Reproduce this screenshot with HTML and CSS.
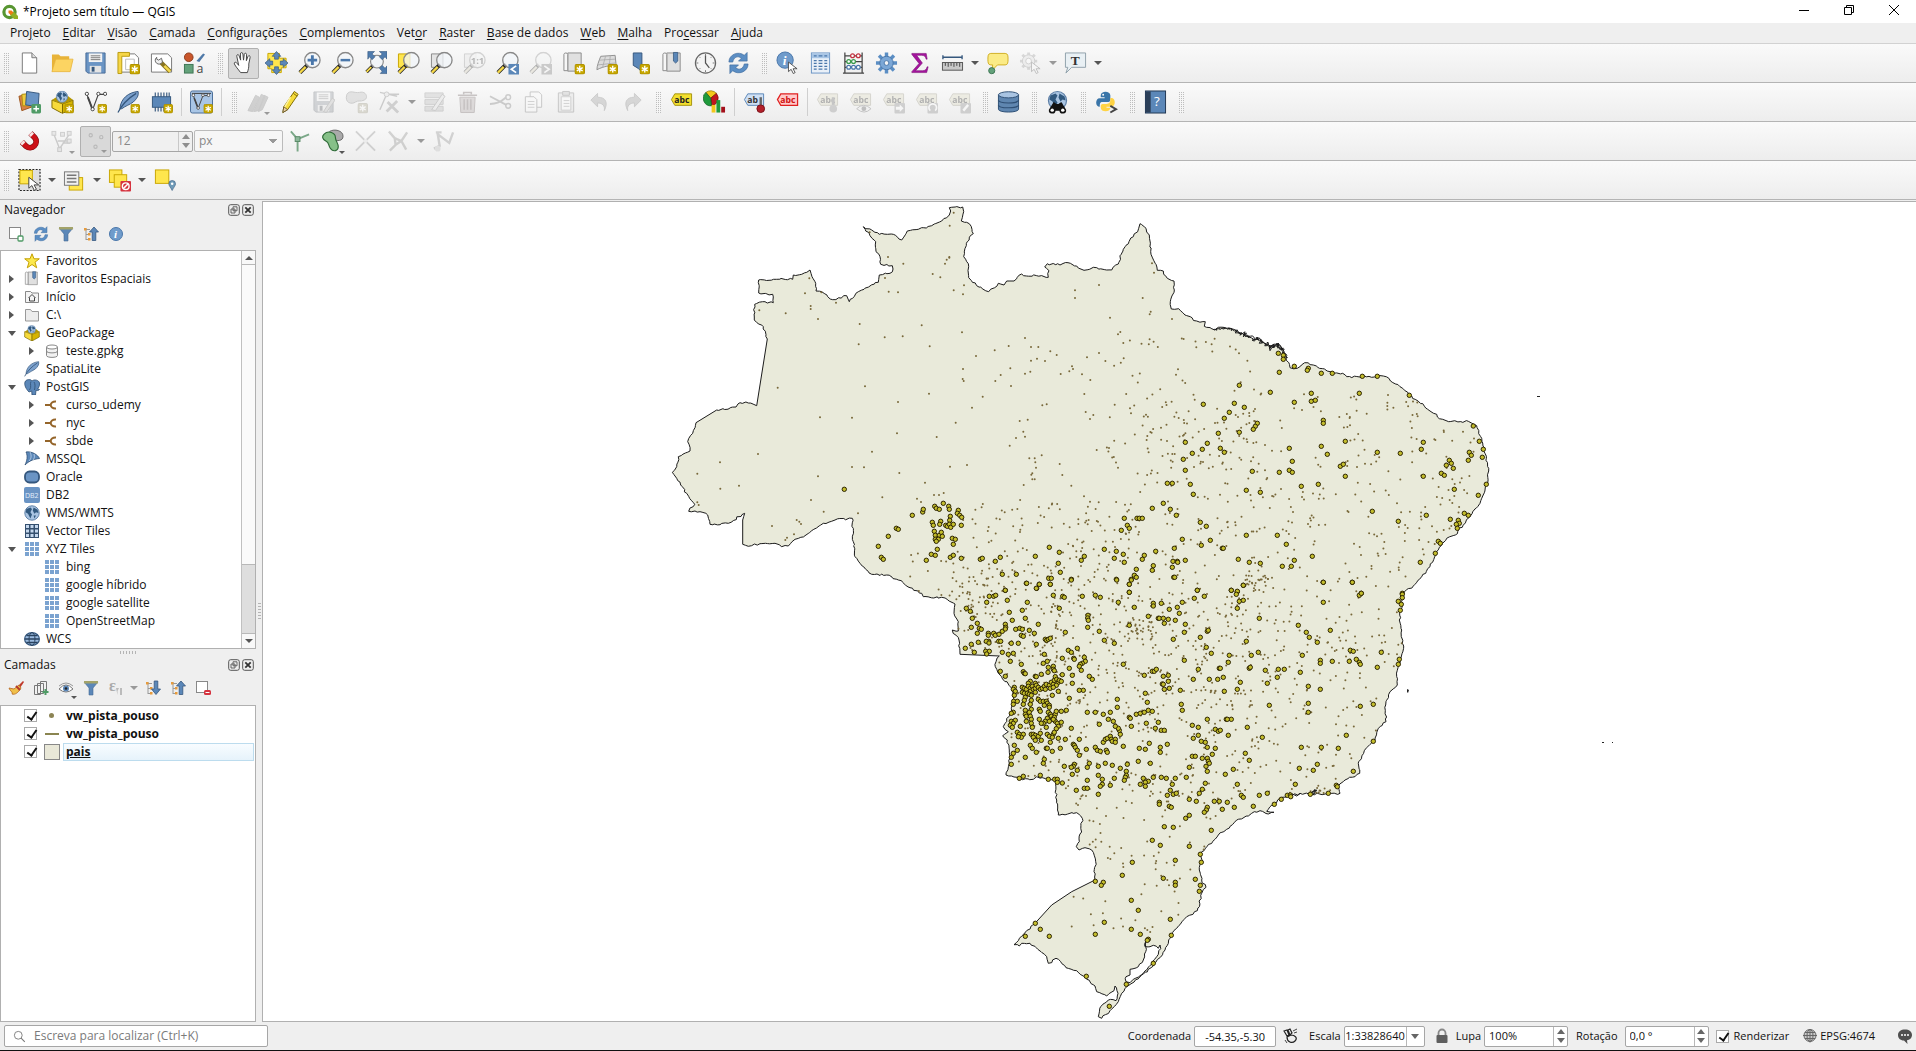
FILE: index.html
```html
<!DOCTYPE html>
<html lang="pt-BR">
<head>
<meta charset="utf-8">
<title>*Projeto sem título — QGIS</title>
<link rel="stylesheet" href="styles.css">
</head>
<body>
<svg class="defs" aria-hidden="true">
  <defs>
    <symbol id="b-new" viewBox="0 0 10 10"><rect x=".5" y=".5" width="9" height="9" rx="1.5" fill="#c8a800" stroke="#b09200"/><path d="M5 1.8v6.4M2.2 3.4l5.6 3.2M7.8 3.4L2.2 6.6" stroke="#fff" stroke-width="1.3"/></symbol>
    <symbol id="b-lens" viewBox="0 0 24 24"><path d="M10.5 13.5L2 22" stroke="#222" stroke-width="4.2"/><path d="M8 16l-6 6" stroke="#f5d848" stroke-width="2.4"/><circle cx="15" cy="9" r="8" fill="#f2f6fa" fill-opacity=".75" stroke="#888" stroke-width="1.4"/></symbol>
    <symbol id="b-cursor" viewBox="0 0 12 14"><path d="M1 1v10l2.8-2.4L6 13l2-1-2.2-4H10z" fill="#fff" stroke="#444" stroke-width=".9"/></symbol>
    <symbol id="b-globe" viewBox="0 0 20 20"><circle cx="10" cy="10" r="9" fill="#a9c4e2" stroke="#5d7fa6" stroke-width="1.2"/><path d="M3 5l5-2 2 2-2 4 2 3-2 5-3-6-3-2zM12 3l5 3 1 4-3-1-2 2-2-4zM12 13l3 0-2 4z" fill="#31597f"/></symbol>

    <symbol id="i-new" viewBox="0 0 24 24"><path d="M4.500 1.500h10l5 5v16h-15z" fill="#fff" stroke="#777"/><path d="M14.500 1.500v5h5" fill="#ddd" stroke="#777"/></symbol>
    <symbol id="i-open" viewBox="0 0 24 24"><path d="M1 3h7l2 2h9v4H5L1 22z" fill="#e8b339"/><path d="M5 8h18l-3 13H1z" fill="#fcd462" stroke="#e8b339" stroke-width=".8"/></symbol>
    <symbol id="i-save" viewBox="0 0 24 24"><path d="M2 1.500h20v21H4l-2-2z" fill="#6a94c4" stroke="#476b96"/><path d="M5 2h14v9H5z" fill="#f3f3f3"/><path d="M7 4.500h10M7 6.500h10M7 8.500h10" stroke="#777"/><path d="M6 15h12v7H6z" fill="#e4e4e4"/><path d="M8 16h3v5H8z" fill="#35577d"/></symbol>
    <symbol id="i-layout" viewBox="0 0 24 24"><path d="M2.500 2.500h16l4 4v15h-20z" fill="#fff" stroke="#777"/><path d="M1 1h12v4H5v18H1z" fill="#f6d648" stroke="#b89a10"/><path d="M9 8h9v11H9z" fill="#fff" stroke="#bbb"/><use href="#b-new" x="13" y="13" width="11" height="11"/></symbol>
    <symbol id="i-layoutmgr" viewBox="0 0 24 24"><path d="M1.500 2.500h17l4 4v15h-21z" fill="#fff" stroke="#777"/><path d="M11 11l10 10" stroke="#8a7520" stroke-width="4.500"/><path d="M15 15l6 6" stroke="#f4d94e" stroke-width="2.600"/><path d="M7 6a4 4 0 1 0 6 5l-1-4-3 2-2-1z" fill="#eee" stroke="#666"/></symbol>
    <symbol id="i-style" viewBox="0 0 24 24"><circle cx="6" cy="6" r="4.500" fill="#c9562b" stroke="#8d3a1a"/><path d="M14 10l7-8 2 1-6 8z" fill="#4f79a8"/><rect x="1.500" y="13.500" width="9" height="9" fill="#63a17a" stroke="#3d7553"/><text x="14" y="22.500" font-size="13" class="glyph" fill="#444">a</text></symbol>
    <symbol id="i-hand" viewBox="0 0 24 24"><path d="M9 22c-3-4-5-6-6.500-9-.6-2 1.500-2.400 2.700-.8L7 14.500 5 5c-.4-2 1.900-2.400 2.400-.6L9 9 8.800 2.600c0-2 2.400-2 2.600 0L12 9l.8-6c.3-1.800 2.500-1.500 2.400.3L15 9.600l1.600-4.300c.7-1.700 2.700-.9 2.300.8L17.500 13c.3 3-.5 6-1.500 9z" fill="#fff" stroke="#444"/></symbol>
    <symbol id="i-pansel" viewBox="0 0 24 24"><path d="M3 2h12v5h7v10h-5v5H7v-4H3z" fill="#ffe64d" stroke="#c9a600"/><path d="M12 0l4.500 5H14v3h-4V5H7.500zM12 24l4.500-5H14v-3h-4v3H7.500zM0 12l5-4.500V10h3v4H5v2.500zM24 12l-5-4.500V10h-3v4h3v2.500z" fill="#5b87b8" stroke="#35577d" stroke-width=".7"/></symbol>
    <symbol id="i-zin" viewBox="0 0 24 24"><use href="#b-lens"/><path d="M15 4v10M10 9h10" stroke="#4a77aa" stroke-width="3"/></symbol>
    <symbol id="i-zout" viewBox="0 0 24 24"><use href="#b-lens"/><path d="M10 9h10" stroke="#4a77aa" stroke-width="2.600"/></symbol>
    <symbol id="i-zfull" viewBox="0 0 24 24"><use href="#b-lens" x="1" y="3" width="20" height="20"/><path d="M4 0h7L8.500 2.500l3 3-3 3-3-3L4 8zM24 0v8l-2-2.500-3 3-3-3 3-3L16 0zM24 23h-7l2-2.500-3-3 3-3 3 3 2-2.500z" fill="#4f7cae" stroke="#35577d" stroke-width=".6"/></symbol>
    <symbol id="i-zsel" viewBox="0 0 24 24"><path d="M1.500 2.500h12v14h-12z" fill="#ffe64d" stroke="#c9a600"/><use href="#b-lens"/></symbol>
    <symbol id="i-zlayer" viewBox="0 0 24 24"><path d="M1.500 2.500h12v14h-12z" fill="#e4e4e4" stroke="#888"/><use href="#b-lens"/></symbol>
    <symbol id="i-znat" viewBox="0 0 24 24"><use href="#i-zlayer"/><text x="8" y="13" font-size="10" font-weight="700" class="glyph" fill="#333">1:1</text></symbol>
    <symbol id="i-zlast" viewBox="0 0 24 24"><use href="#b-lens"/><rect x="13" y="13" width="11" height="11" fill="#5b87b8"/><path d="M21 15l-5 3.500 5 3.500" fill="none" stroke="#fff" stroke-width="1.800"/></symbol>
    <symbol id="i-znext" viewBox="0 0 24 24"><use href="#b-lens"/><rect x="13" y="13" width="11" height="11" fill="#777"/><path d="M16 15l5 3.500-5 3.500" fill="none" stroke="#fff" stroke-width="1.800"/></symbol>
    <symbol id="i-map" viewBox="0 0 24 24"><path d="M6 1.500h14v19H6z" fill="#e0e0e0" stroke="#8a8a8a"/><path d="M2 3c0-2 4-2 4 0v17H2z" fill="#f6f6f6" stroke="#8a8a8a"/></symbol>
    <symbol id="i-newmap" viewBox="0 0 24 24"><use href="#i-map"/><use href="#b-new" x="13" y="13" width="11" height="11"/></symbol>
    <symbol id="i-new3d" viewBox="0 0 24 24"><path d="M6 5l15-1 1 10c-7 1-12 1-20 5 0-4 2-9 4-14z" fill="#dcdcdc" stroke="#8f8f8f"/><path d="M5 9l16-1M3 14l18-2M11 5L8 16M16 4l-1 10" stroke="#a8a8a8" stroke-width=".8"/><use href="#b-new" x="13" y="13" width="11" height="11"/></symbol>
    <symbol id="i-newbm" viewBox="0 0 24 24"><path d="M5.500 1.500h9v20l-4-4-5-3z" fill="#5b87b8" stroke="#35577d"/><use href="#b-new" x="12" y="13" width="11" height="11"/></symbol>
    <symbol id="i-bm" viewBox="0 0 24 24"><use href="#i-map"/><path d="M13 1h4.500v9l-2.250 2L13 10z" fill="#5b87b8" stroke="#35577d" stroke-width=".8"/></symbol>
    <symbol id="i-clock" viewBox="0 0 24 24"><circle cx="12" cy="12" r="10.500" fill="#f4f4f4" stroke="#666" stroke-width="1.300"/><path d="M12 4v8l4 5" fill="none" stroke="#555" stroke-width="1.300"/><path d="M12 2.500v2M12 19.500v2M2.500 12h2M19.500 12h2M5.500 5.500l1 1M18.500 5.500l-1 1M5.500 18.500l1-1M18.500 18.500l-1-1" stroke="#777"/></symbol>
    <symbol id="i-refresh" viewBox="0 0 24 24"><path d="M2 11C2 3 12-1 18 4l3-3v9h-9l3-3c-4-3-8-1-9 4z" fill="#5b8ec4" stroke="#3f6c9f" stroke-width=".7"/><path d="M22 13c0 8-10 12-16 7l-3 3v-9h9l-3 3c4 3 8 1 9-4z" fill="#5b8ec4" stroke="#3f6c9f" stroke-width=".7"/></symbol>
    <symbol id="i-info" viewBox="0 0 24 24"><circle cx="9.500" cy="9" r="8.500" fill="#6f9bcb" stroke="#4a77aa"/><text x="7" y="14" font-size="14" class="serif" fill="#fff">i</text><use href="#b-cursor" x="12" y="10" width="12" height="14"/></symbol>
    <symbol id="i-table" viewBox="0 0 24 24"><rect x="2.500" y="1.500" width="19" height="21" fill="#e9f0f8" stroke="#6a94c4"/><path d="M3 2h18v5H3z" fill="#a9c6e6"/><path d="M5 4.500h3M10 4.500h4M16 4.500h3M5 9.500h3M10 9.500h4M16 9.500h3M5 12.500h3M10 12.500h4M16 12.500h3M5 15.500h3M10 15.500h4M16 15.500h3M5 18.500h3M10 18.500h4M16 18.500h3" stroke="#4a77aa" stroke-width="1.300"/></symbol>
    <symbol id="i-abacus" viewBox="0 0 24 24"><path d="M3 1v21M21 1v21M1 22.500h22M3 4.500h18M3 10.500h18M3 16.500h18" stroke="#444" stroke-width="1.300"/><g fill="#fff" stroke-width="1.300"><g stroke="#c2333f"><circle cx="11" cy="4.500" r="2"/><circle cx="17" cy="4.500" r="2"/></g><g stroke="#3a9a4c"><circle cx="7" cy="10.500" r="2"/><circle cx="12" cy="10.500" r="2"/></g><g stroke="#4a77aa"><circle cx="7" cy="16.500" r="2"/><circle cx="12" cy="16.500" r="2"/><circle cx="17" cy="16.500" r="2"/></g></g></symbol>
    <symbol id="i-gear" viewBox="0 0 24 24"><path d="M12 1v22M1 12h22M4.200 4.200l15.600 15.600M19.800 4.200L4.200 19.800" stroke="#5b8ec4" stroke-width="3.600"/><circle cx="12" cy="12" r="7" fill="#7ba7d6" stroke="#4a77aa"/><circle cx="12" cy="12" r="2.500" fill="#f5f5f5" stroke="#4a77aa"/></symbol>
    <symbol id="i-sum" viewBox="0 0 24 24"><path d="M4 2h15l1 6h-1c-1-3-2-4-5-4H9l6 8-7 8h7c3 0 4-1 5-4h1l-1.500 6H4v-1l7.500-8.500L4 3z" fill="#a3149c" stroke="#7e0f79" stroke-width=".6"/></symbol>
    <symbol id="i-ruler" viewBox="0 0 24 24"><path d="M2 6h20M2 4v4M22 4v4" stroke="#35577d" stroke-width="1.400"/><rect x="1.500" y="11.500" width="21" height="8" fill="#c9c9c9" stroke="#555"/><path d="M4.500 12v3M7.500 12v4M10.500 12v3M13.500 12v4M16.500 12v3M19.500 12v4" stroke="#444"/></symbol>
    <symbol id="i-tip" viewBox="0 0 24 24"><path d="M5 2h15c3 0 3 3 3 6s0 6-3 6h-8l-6 6 1-6H5c-3 0-3-3-3-6s0-6 3-6z" fill="#fbeb86" stroke="#d0ae20"/><circle cx="6" cy="20" r="3.200" fill="#63a17a" stroke="#3d7553"/></symbol>
    <symbol id="i-action" viewBox="0 0 24 24"><path d="M10 1v18M1 10h18M3.500 3.500l13 13M16.500 3.500l-13 13" stroke="#999" stroke-width="3"/><circle cx="10" cy="10" r="6.500" fill="#ddd" stroke="#888"/><circle cx="10" cy="10" r="3" fill="#fff" stroke="#888"/><use href="#b-cursor" x="12" y="10" width="12" height="14"/></symbol>
    <symbol id="i-text" viewBox="0 0 24 24"><path d="M1.500 1.500h21v15H8l-6 6 2-6H1.500z" fill="#e9f0f4" stroke="#8fa0aa"/><text x="7" y="14" font-size="14" class="serif upright" fill="#333">T</text></symbol>

    <symbol id="i-dsm" viewBox="0 0 24 24"><path d="M1 6l11-3 3 14-11 4z" fill="#d98243" stroke="#9d561f"/><path d="M4 4l10-1v13H5z" fill="#f0cc3d" stroke="#b08f10"/><path d="M9 1l13 2-1 14-13-2z" fill="#6a94c4" stroke="#35577d"/><rect x="14" y="14" width="10" height="10" rx="1.500" fill="#4f9b66"/><path d="M19 16v6M16 19h6" stroke="#fff" stroke-width="1.500"/></symbol>
    <symbol id="i-gpkg" viewBox="0 0 24 24"><path d="M1 10l11 4v10L1 18z" fill="#f7da3a" stroke="#7d6a00"/><path d="M12 14l11-4v8l-11 6z" fill="#d6b400" stroke="#7d6a00"/><path d="M1 10l6-4h11l5 4-11 4z" fill="#b39600"/><use href="#b-globe" x="4" y="0" width="15" height="13"/></symbol>
    <symbol id="i-newgpkg" viewBox="0 0 24 24"><use href="#i-gpkg"/><use href="#b-new" x="14" y="14" width="10" height="10"/></symbol>
    <symbol id="i-shape" viewBox="0 0 24 24"><path d="M3 4l6 16L15 4h7" fill="none" stroke="#444" stroke-width="1.200"/><path d="M4 7l5 13" stroke="#444" stroke-width="2"/><g fill="#fff" stroke="#444"><circle cx="3" cy="3.500" r="1.700"/><circle cx="9" cy="19.500" r="1.700"/><circle cx="15" cy="3.500" r="1.700"/><circle cx="22" cy="3.500" r="1.700"/></g></symbol>
    <symbol id="i-newshape" viewBox="0 0 24 24"><use href="#i-shape"/><use href="#b-new" x="14" y="14" width="10" height="10"/></symbol>
    <symbol id="i-feather" viewBox="0 0 24 24"><path d="M3 19C4 8 12 2 22 1c1 5-2 8-5 11-4 3-8 4-12 7z" fill="#7ba0cc" stroke="#35577d"/><path d="M1 23C5 15 12 8 20 3" fill="none" stroke="#35577d" stroke-width="1.300"/></symbol>
    <symbol id="i-newfeather" viewBox="0 0 24 24"><use href="#i-feather"/><use href="#b-new" x="14" y="14" width="10" height="10"/></symbol>
    <symbol id="i-mem" viewBox="0 0 24 24"><path d="M5.500 2v20M8.500 2v20M11.500 2v20M14.500 2v20M17.500 2v20M20 2v15" stroke="#35577d" stroke-width="1.200"/><rect x="2.500" y="6.500" width="19" height="11" fill="#5b87b8" stroke="#35577d"/><use href="#b-new" x="14" y="14" width="10" height="10"/></symbol>
    <symbol id="i-virtual" viewBox="0 0 24 24"><rect x=".5" y=".5" width="23" height="23" rx="2" fill="#a9c6e6" stroke="#476b96"/><path d="M2 3h20" stroke="#333"/><use href="#i-shape" x="1" y="2" width="20" height="20"/><use href="#b-new" x="14" y="14" width="10" height="10"/></symbol>

    <symbol id="i-edits" viewBox="0 0 24 24"><path d="M2 21l8-16 4 2-7 15zM8 22l8-18 4 2-7 15zM13 22l6-17 4 2-6 13z" fill="#888" stroke="#777"/></symbol>
    <symbol id="i-pencil" viewBox="0 0 24 24"><path d="M4 23l1-6L16 1l4 3L9 20z" fill="#f6dc3c" stroke="#7d6a00"/><path d="M15 3l4 3" stroke="#7d6a00"/><path d="M4 23l1-6 4 3z" fill="#e9cfa4" stroke="#5b4b20" stroke-width=".8"/><path d="M12 7L6 17" stroke="#fff4a0" stroke-width="1.500"/></symbol>
    <symbol id="i-saveedit" viewBox="0 0 24 24"><use href="#i-save"/><path d="M12 22l9-14 3 2-9 13z" fill="#bbb" stroke="#777"/></symbol>
    <symbol id="i-addpoly" viewBox="0 0 24 24"><path d="M2 4c3-5 8-1 13-2 7-2 10 6 5 8-4 2-6 0-9 2-4 3-12 1-9-8z" fill="#bbb" stroke="#777"/><use href="#b-new" x="13" y="13" width="11" height="11"/></symbol>
    <symbol id="i-vertex" viewBox="0 0 24 24"><path d="M2 20L9 4M2 2l18 4M9 4l13 0" stroke="#777" stroke-width="1.500"/><circle cx="9" cy="4" r="2.500" fill="#ddd" stroke="#777"/><path d="M10 12l11 11M20 11L9 22" stroke="#888" stroke-width="3"/></symbol>
    <symbol id="i-modattr" viewBox="0 0 24 24"><path d="M2 2.500h19v5H2zM2 9.500h19v5H2zM2 16.500h19v5H2z" fill="#b9b9b9" stroke="#888"/><path d="M9 20L20 4l3 2-10 15z" fill="#ddd" stroke="#777"/></symbol>
    <symbol id="i-trash" viewBox="0 0 24 24"><path d="M4 7h16l-1 16H5z" fill="#d99a9a" stroke="#a05050"/><path d="M2 5h20M8 4V2h8v2M8.500 9v11M12 9v11M15.500 9v11" fill="none" stroke="#a05050" stroke-width="1.600"/></symbol>
    <symbol id="i-cut" viewBox="0 0 24 24"><path d="M1 6l17 9M1 14c6 0 10-1 17-7" fill="none" stroke="#777" stroke-width="2"/><circle cx="20" cy="7" r="2.500" fill="none" stroke="#777" stroke-width="1.500"/><circle cx="20" cy="16" r="2.500" fill="none" stroke="#777" stroke-width="1.500"/></symbol>
    <symbol id="i-copy" viewBox="0 0 24 24"><path d="M8.500 1.500h9l3 3v13h-12z" fill="#fff" stroke="#666"/><path d="M3.500 6.500h9l3 3v13h-12z" fill="#fff" stroke="#666"/><path d="M6 11.500h7M6 14.500h7M6 17.500h7" stroke="#888"/></symbol>
    <symbol id="i-paste" viewBox="0 0 24 24"><path d="M3.500 2.500h16v20h-16z" fill="#ddd" stroke="#666"/><path d="M8 1h7v4H8z" fill="#bbb" stroke="#666"/><path d="M6.500 6.500h10v14h-10z" fill="#fff" stroke="#888"/><path d="M9 10.500h6M9 13.500h6M9 16.500h6" stroke="#888"/></symbol>
    <symbol id="i-undo" viewBox="0 0 24 24"><path d="M3 10l7-7v4c9 0 11 6 7 14 1-5-2-8-7-8v4z" fill="#999" stroke="#777"/></symbol>
    <symbol id="i-redo" viewBox="0 0 24 24"><path d="M21 10l-7-7v4c-9 0-11 6-7 14-1-5 2-8 7-8v4z" fill="#999" stroke="#777"/></symbol>
    <symbol id="i-label" viewBox="0 0 24 24"><path d="M5 3.500h17.500v12H5L1.500 9.500z" fill="#f3df2e" stroke="#a59310"/><text x="4.500" y="13" font-size="9" font-weight="700" class="glyph" fill="#222">abc</text></symbol>
    <symbol id="i-diagram" viewBox="0 0 24 24"><path d="M8 8L3 2a8 8 0 0 1 11 1z" fill="#f3c71b" stroke="#8a6d00" stroke-width=".7"/><path d="M8 8l6-5a8 8 0 0 1-5 13z" fill="#c2161f" stroke="#700" stroke-width=".7"/><path d="M8 8L3 2a8 8 0 0 0 6 14z" fill="#1f9a3c" stroke="#0c5a20" stroke-width=".7"/><path d="M9 15h4v8H9z" fill="#f3c71b"/><path d="M14 10h4v13h-4z" fill="#1f9a3c"/><path d="M19 17h4v6h-4z" fill="#a3101a"/></symbol>
    <symbol id="i-pin" viewBox="0 0 24 24"><path d="M5 3.500h16.500v12H5L1.500 9.500z" fill="#cfe0f4" stroke="#5b87b8"/><text x="4.500" y="13" font-size="9" font-weight="700" class="glyph" fill="#333">ab</text><path d="M18.500 7v8" stroke="#666" stroke-width="2.500"/><circle cx="18.500" cy="19" r="4" fill="#b3202a" stroke="#7a1018"/></symbol>
    <symbol id="i-labelred" viewBox="0 0 24 24"><path d="M5 3.500h17.500v12H5L1.500 9.500z" fill="#ffc9c9" stroke="#e02020" stroke-width="1.300"/><text x="4.500" y="13" font-size="9" font-weight="700" class="glyph" fill="#d01010">abc</text></symbol>
    <symbol id="i-lpin" viewBox="0 0 24 24"><use href="#i-label"/><path d="M18 7v8" stroke="#666" stroke-width="3"/><circle cx="18" cy="19" r="4" fill="#888"/></symbol>
    <symbol id="i-leye" viewBox="0 0 24 24"><use href="#i-label"/><path d="M8 19q7-7 15 0-7 7-15 0z" fill="#eee" stroke="#666"/><circle cx="15.500" cy="19" r="2.500" fill="#555"/></symbol>
    <symbol id="i-lmove" viewBox="0 0 24 24"><use href="#i-label"/><rect x="13" y="13" width="11" height="11" rx="1" fill="#888"/><path d="M14.500 17h4v-2.500l4 4-4 4V20h-4z" fill="#fff"/></symbol>
    <symbol id="i-lrot" viewBox="0 0 24 24"><use href="#i-label"/><rect x="13" y="13" width="11" height="11" rx="1" fill="#888"/><path d="M16 21a4 4 0 1 1 5 0" fill="none" stroke="#fff" stroke-width="1.800"/></symbol>
    <symbol id="i-lchg" viewBox="0 0 24 24"><use href="#i-label"/><rect x="13" y="13" width="11" height="11" rx="1" fill="#888"/><path d="M16 21l5-6" stroke="#fff" stroke-width="2.500"/></symbol>
    <symbol id="i-db" viewBox="0 0 24 24"><path d="M1.500 4.500v15c0 4 21 4 21 0v-15" fill="#5f86b0" stroke="#2f4f74"/><ellipse cx="12" cy="4.500" rx="10.500" ry="3.200" fill="#a9c4e2" stroke="#2f4f74"/><path d="M1.500 10c0 4 21 4 21 0M1.500 15c0 4 21 4 21 0" fill="none" stroke="#2f4f74" stroke-width="1.200"/></symbol>
    <symbol id="i-metasearch" viewBox="0 0 24 24"><use href="#b-globe" x="0" y="0" width="24" height="21"/><path d="M8 12l3 2h2l3-2 5 8a3.500 3.500 0 1 1-7 1h-4a3.500 3.500 0 1 1-7-1z" fill="#111"/><circle cx="6.500" cy="20.500" r="1.800" fill="#fff"/><circle cx="17.500" cy="20.500" r="1.800" fill="#fff"/></symbol>
    <symbol id="i-python" viewBox="0 0 24 24"><path d="M6 10V5c0-5 10-5 10 0v4c0 3-2 3-4 3H8c-3 0-3 2-3 5-5 0-5-9 0-9h5V7H6z" fill="#3a75a8"/><path d="M16 8c6-1 6 9 1 9h-5v1h4c0 5-10 5-10 0 0-3 0-4 3-4h3c3 0 4-2 4-4z" fill="#ffd343"/><circle cx="8.500" cy="4.500" r="1" fill="#fff"/><path d="M16 16l6 3.500-6 3.500" fill="none" stroke="#444" stroke-width="2"/></symbol>
    <symbol id="i-help" viewBox="0 0 24 24"><rect x="1.500" y=".5" width="21" height="23" fill="#5b87b8" stroke="#1f3550"/><path d="M2 1h5v22H2z" fill="#2b3f58"/><text x="10.500" y="16" font-size="14" class="glyph" fill="#fff">?</text></symbol>

    <symbol id="i-magnet" viewBox="0 0 24 24"><path d="M13 4l4.500 4.500a6.400 6.400 0 0 1-9 9L4 13" fill="none" stroke="#7d0a0e" stroke-width="6"/><path d="M13 4l4.500 4.500a6.400 6.400 0 0 1-9 9L4 13" fill="none" stroke="#cc1017" stroke-width="4.800"/><path d="M13 4l2 2M4 13l2 2" stroke="#f6e4e4" stroke-width="4.800"/></symbol>
    <symbol id="i-snapv" viewBox="0 0 24 24"><path d="M3 5l6 15L19 5M7 12h12M12 14h8" fill="none" stroke="#777" stroke-width="1.500"/><g fill="#ccc" stroke="#777"><rect x="1" y="2" width="4" height="4"/><rect x="7" y="19" width="4" height="4"/><rect x="17" y="2" width="4" height="4"/><rect x="17" y="10" width="4" height="4"/><rect x="10" y="3" width="4" height="4"/></g></symbol>
    <symbol id="i-snapdots" viewBox="0 0 24 24"><g fill="#ddd" stroke="#777" stroke-width="1.200"><circle cx="7" cy="6" r="1.700"/><circle cx="18" cy="8" r="1.700"/><circle cx="12" cy="18" r="1.700"/></g></symbol>
    <symbol id="i-topo" viewBox="0 0 24 24"><path d="M10 10L3 2M10 10l12-5M10 10v13" stroke="#7ba888" stroke-width="2"/><rect x="7.500" y="7.500" width="5" height="5" fill="#8cb89a" stroke="#5a8a68"/></symbol>
    <symbol id="i-overlap" viewBox="0 0 24 24"><path d="M9 2c5-3 14-1 14 5s-7 4-9 5z" fill="#aaa" stroke="#666"/><path d="M3 5c5-5 12-1 12 3s3 6 3 10-5 6-8 2-1-6-5-8-4-5-2-7z" fill="#86c088" stroke="#2f6b38" stroke-width="1.200"/></symbol>
    <symbol id="i-cross" viewBox="0 0 24 24"><path d="M2 2l20 20M22 2L2 22" stroke="#888" stroke-width="2"/><circle cx="12" cy="12" r="2" fill="#ddd"/></symbol>
    <symbol id="i-trace" viewBox="0 0 24 24"><path d="M2 2l6 7 1 7-6 6M8 9l7 3 6-9M9 16l6-4 5 9" fill="none" stroke="#887" stroke-width="2.500"/></symbol>
    <symbol id="i-self" viewBox="0 0 24 24"><path d="M2 20l6-3L6 5l12 9 4-11M4 3h6" fill="none" stroke="#888" stroke-width="2.500"/><circle cx="6" cy="20" r="3" fill="#bbb"/></symbol>
    <symbol id="i-select" viewBox="0 0 24 24"><rect x="1" y="1" width="22" height="22" fill="#dedede" stroke="#222" stroke-dasharray="2 1.500" stroke-width="1.200"/><rect x="2" y="2" width="13" height="14" fill="#ffe64d" stroke="#c9a600"/><use href="#b-cursor" x="10" y="8" width="14" height="16"/></symbol>
    <symbol id="i-selval" viewBox="0 0 24 24"><rect x="6.500" y="9.500" width="14" height="13" fill="#ffe64d" stroke="#c9a600"/><rect x="1.500" y="3.500" width="15" height="14" fill="#f1f1f1" stroke="#777"/><path d="M4 7h10M4 10.500h10M4 14h10" stroke="#777" stroke-width="1.500"/></symbol>
    <symbol id="i-desel" viewBox="0 0 24 24"><rect x="1.500" y="1.500" width="13" height="13" fill="#ffe64d" stroke="#c9a600"/><rect x="6.500" y="6.500" width="13" height="13" fill="#ffe64d" stroke="#c9a600"/><rect x="13" y="13" width="11" height="11" rx="1" fill="#d5333f"/><circle cx="18.500" cy="18.500" r="3.500" fill="none" stroke="#fff" stroke-width="1.500"/><path d="M16 21l5-5" stroke="#fff" stroke-width="1.500"/></symbol>
    <symbol id="i-selloc" viewBox="0 0 24 24"><rect x="2.500" y="1.500" width="14" height="14" fill="#ffe64d" stroke="#c9a600"/><path d="M20 23c-2-4-3.500-5-3.500-7a3.500 3.500 0 0 1 7 0c0 2-1.500 3-3.500 7z" fill="#6f9bb8" stroke="#35577d" stroke-width=".6"/><circle cx="20" cy="16" r="1.300" fill="#fff"/></symbol>

    <symbol id="t-star" viewBox="0 0 16 16"><path d="M8 .8l2 5h5.300L11 9.200l1.700 5.600L8 11.500l-4.700 3.300L5 9.200.7 5.800H6z" fill="#fce94f" stroke="#c4a000"/></symbol>
    <symbol id="t-home" viewBox="0 0 16 16"><path d="M1.500 2.500h5l1.500 1.500h6.500v9.500h-13z" fill="#f4f4f4" stroke="#888"/><path d="M4.500 9L8 5.500 11.500 9M5.500 8.500v3.500h5V8.500" fill="none" stroke="#444"/></symbol>
    <symbol id="t-folder" viewBox="0 0 16 16"><path d="M1.500 2.500h5l1.500 2h6.500v9.500h-13z" fill="#ececec" stroke="#999"/></symbol>
    <symbol id="t-dbs" viewBox="0 0 16 16"><path d="M2.500 4v8.500c0 2.500 11 2.500 11 0V4" fill="#f1f1f1" stroke="#888"/><ellipse cx="8" cy="4" rx="5.500" ry="2" fill="#fff" stroke="#888"/><path d="M2.500 8c0 2.500 11 2.500 11 0" fill="none" stroke="#888"/></symbol>
    <symbol id="t-pg" viewBox="0 0 16 16"><path d="M1 3c1-3 6-3 7-1 2-2 7-1 7.500 2 .3 3-1 5-2 6l2 .5c-1 1.500-3 1-3.500.8L11.500 16H8l-.3-4L5 13C2 10 0 6 1 3z" fill="#5b87b8" stroke="#2f4f74" stroke-width=".8"/><path d="M7 2.500C5.500 5 8 8 5.500 11M10 3c1.500 2 1 5 .5 8" fill="none" stroke="#2f4f74" stroke-width=".8"/></symbol>
    <symbol id="t-conn" viewBox="0 0 16 16"><path d="M1 8h6M12 4.500C5 4 5 12 12 11.500" fill="none" stroke="#95652a" stroke-width="2"/></symbol>
    <symbol id="t-mssql" viewBox="0 0 16 16"><path d="M2 1c6-1 12 3 13.500 6.500C11 8 6 9 1 14c2-4 3-9 1-13z" fill="#5b87b8" stroke="#2f4f74" stroke-width=".8"/><path d="M6 1c2 4 1 7-1 9M10 3c1 3 0 5-1 6" fill="none" stroke="#cfe0f4" stroke-width=".7"/></symbol>
    <symbol id="t-oracle" viewBox="0 0 16 16"><rect x="1" y="2.500" width="14" height="11" rx="4.500" fill="#6a94c4" stroke="#35577d" stroke-width="1.800"/></symbol>
    <symbol id="t-db2" viewBox="0 0 16 16"><rect width="16" height="16" rx="2" fill="#6a94c4"/><text x="1" y="10.500" font-size="7" class="glyph" fill="#e4eefa">DB2</text></symbol>
    <symbol id="t-wcs" viewBox="0 0 16 16"><ellipse cx="8" cy="8" rx="7.400" ry="6.400" fill="#9bbbe0" stroke="#35577d" stroke-width="1.200"/><path d="M1 8h14M2.500 4.500h11M2.500 11.500h11" stroke="#2a435f" stroke-width="1.500"/><ellipse cx="8" cy="8" rx="3" ry="6.400" fill="none" stroke="#2a435f"/></symbol>
    <symbol id="t-vt" viewBox="0 0 16 16"><rect x="1" y="1" width="14" height="14" fill="#35506f"/><path d="M2 2h3v3H2zM6.500 2h3v3h-3zM11 2h3v3h-3zM2 6.500h3v3H2zM6.500 6.500h3v3h-3zM11 6.500h3v3h-3zM2 11h3v3H2zM6.500 11h3v3h-3zM11 11h3v3h-3z" fill="#c5d8ee"/></symbol>
    <symbol id="t-xyz" viewBox="0 0 16 16"><path d="M1 1h4v4H1zM6 1h4v4H6zM11 1h4v4h-4zM1 6h4v4H1zM6 6h4v4H6zM11 6h4v4h-4zM1 11h4v4H1zM6 11h4v4H6zM11 11h4v4h-4z" fill="#7ba3d0"/></symbol>

    <symbol id="p-add" viewBox="0 0 16 16"><rect x="1.500" y="1.500" width="11" height="11" fill="#fff" stroke="#888"/><rect x="10" y="10" width="5" height="5" rx="1" fill="#fff" stroke="#4f9b66" stroke-width="1.300"/></symbol>
    <symbol id="p-filter" viewBox="0 0 16 16"><path d="M1 2h14L10 8v7H6V8z" fill="#5b87b8" stroke="#476b96" stroke-width=".6"/><path d="M1 1h14v2.500H1z" fill="#a3a36a"/></symbol>
    <symbol id="p-up" viewBox="0 0 16 16"><path d="M3 2v12M3 3.500h4M3 8.500h4M3 13.500h4" stroke="#999"/><path d="M1 2h2.500v2.500H1zM5 7h2.500v2.500H5zM5 12h2.500v2.500H5z" fill="#e79b3c"/><path d="M11 1l4.500 5h-2.700v8.500H9.200V6H6.500z" fill="#5b87b8" stroke="#35577d" stroke-width=".8"/></symbol>
    <symbol id="p-down" viewBox="0 0 16 16"><path d="M3 2v12M3 3.500h4M3 8.500h4M3 13.500h4" stroke="#999"/><path d="M1 2h2.500v2.500H1zM5 7h2.500v2.500H5zM5 12h2.500v2.500H5z" fill="#e79b3c"/><path d="M11 14.500L15.500 9h-2.700V1H9.200v8H6.500z" fill="#5b87b8" stroke="#35577d" stroke-width=".8"/></symbol>
    <symbol id="p-info" viewBox="0 0 16 16"><circle cx="8" cy="8" r="6.500" fill="#6f9bcb" stroke="#4a77aa"/><text x="6" y="12" font-size="11" class="serif" fill="#fff">i</text></symbol>
    <symbol id="p-style" viewBox="0 0 16 16"><path d="M10 6l5-5 1 1-4 6z" fill="#c0392b"/><path d="M1 8l5 1 5-4 2 3c-3 5-6 7-9 6 1-2-2-3-3-6z" fill="#f0c04a" stroke="#b5651d" stroke-width=".8"/><path d="M8 6l4 4" stroke="#b5392b" stroke-width="2"/></symbol>
    <symbol id="p-group" viewBox="0 0 16 16"><path d="M7.500 1.500h6v10h-6zM4.500 3.500h6v10h-6zM1.500 5.500h6v9h-6z" fill="#f1f1f1" stroke="#777"/><path d="M12.500 9v6M9.500 12h6" stroke="#4f9b66" stroke-width="2"/></symbol>
    <symbol id="p-eye" viewBox="0 0 16 16"><path d="M1 9q7-8 14 0-7 6-14 0z" fill="#fff" stroke="#777"/><circle cx="8" cy="8.500" r="3" fill="#5b87b8"/><circle cx="8" cy="8.500" r="1.300" fill="#222"/><path d="M1 6q7-6 14 0" fill="none" stroke="#999"/></symbol>
    <symbol id="p-eps" viewBox="0 0 16 16"><text x="1" y="11" font-size="16" class="serif upright" fill="#aaa">ε</text><path d="M8 8h3l-1.500 3v4zM12 8h2v7h-2z" fill="#bbb"/></symbol>
    <symbol id="p-remove" viewBox="0 0 16 16"><rect x="1.500" y="1.500" width="11" height="11" fill="#fff" stroke="#888"/><rect x="9" y="10" width="7" height="5" rx="1.500" fill="#d5333f"/><path d="M10.500 12.500h4" stroke="#fff"/></symbol>
    <symbol id="p-float" viewBox="0 0 12 12"><rect x=".7" y=".7" width="10.600" height="10.600" rx="2" fill="none" stroke="#555"/><path d="M5 2.800h4v4H5zM3 5h4v4H3z" fill="#eee" stroke="#555" stroke-width=".9"/></symbol>
    <symbol id="p-close" viewBox="0 0 12 12"><rect x=".7" y=".7" width="10.600" height="10.600" rx="2" fill="none" stroke="#555"/><path d="M3.300 3.300l5.400 5.400M8.700 3.300L3.300 8.700" stroke="#333" stroke-width="1.800"/></symbol>
    <symbol id="s-track" viewBox="0 0 16 16"><path d="M2 3l3 5 2-1-2-5zM6 2l2 5 2-2-2-4zM5 9c0 5 5 7 8 4s0-6-4-6z" fill="#eee" stroke="#222" stroke-width="1.200"/><path d="M11 3l4-2M12 5l3-1M3 12l2 3" stroke="#444"/></symbol>
    <symbol id="s-lock" viewBox="0 0 16 16"><path d="M4.500 8V5a3.500 3.500 0 0 1 7 0v3" fill="none" stroke="#888" stroke-width="1.800"/><rect x="2.500" y="7" width="11" height="8" rx="1" fill="#5e5e5e"/></symbol>
    <symbol id="s-globe" viewBox="0 0 16 16"><circle cx="8" cy="7.500" r="6" fill="#c9c9c9" stroke="#666"/><path d="M2 7.500h12M3 4.500h10M3 10.500h10M8 1.500v13M1 7.500h14" stroke="#666"/><ellipse cx="8" cy="7.500" rx="3" ry="6" fill="none" stroke="#666"/></symbol>
    <symbol id="s-chat" viewBox="0 0 16 16"><path d="M8 1.500c4 0 7 2 7 5.500 0 3-2.500 5-5 5.300L10.500 16 7 12.500C3 12.500 1 10 1 7c0-3.500 3-5.500 7-5.500z" fill="#4f4f4f"/><circle cx="5" cy="7" r="1" fill="#fff"/><circle cx="8" cy="7" r="1" fill="#fff"/><circle cx="11" cy="7" r="1" fill="#fff"/></symbol>
    <symbol id="s-search" viewBox="0 0 16 16"><circle cx="6.500" cy="6.500" r="4.800" fill="none" stroke="#777" stroke-width="1.100"/><path d="M10 10l4.500 4.500" stroke="#777" stroke-width="1.300"/></symbol>
  </defs>
</svg>

<div class="window">
  <header class="titlebar">
    <svg class="logo" viewBox="0 0 16 16"><circle cx="7.500" cy="8" r="5.600" fill="none" stroke="#589632" stroke-width="3.200"/><path d="M8 8h4l4 4v3h-4l-4-4z" fill="#93b023"/><path d="M6.500 6.500h3l2 2-2.500 2.500-2.500-2z" fill="#ee7913"/></svg>
    <span class="title">*Projeto sem título — QGIS</span>
    <div class="winbtns">
      <button aria-label="Minimizar"><svg viewBox="0 0 12 12"><path d="M1 6.500h10" stroke="#000"/></svg></button>
      <button aria-label="Restaurar"><svg viewBox="0 0 12 12"><path d="M1.500 3.500h7v7h-7zM3.500 3.500v-2h7v7h-2" fill="none" stroke="#000"/></svg></button>
      <button aria-label="Fechar"><svg viewBox="0 0 12 12"><path d="M1 1l10 10M11 1L1 11" stroke="#000"/></svg></button>
    </div>
  </header>

  <nav class="menubar">
    <button>Pro<u>j</u>eto</button><button><u>E</u>ditar</button><button><u>V</u>isão</button><button><u>C</u>amada</button><button><u>C</u>onfigurações</button><button><u>C</u>omplementos</button><button>Vet<u>o</u>r</button><button><u>R</u>aster</button><button><u>B</u>ase de dados</button><button><u>W</u>eb</button><button><u>M</u>alha</button><button>Pro<u>c</u>essar</button><button><u>A</u>juda</button>
  </nav>

  <div class="toolrow">
    <div class="group" role="toolbar" aria-label="Projeto">
      <button class="tb" aria-label="Novo"><svg><use href="#i-new"/></svg></button>
      <button class="tb" aria-label="Abrir"><svg><use href="#i-open"/></svg></button>
      <button class="tb" aria-label="Salvar"><svg><use href="#i-save"/></svg></button>
      <button class="tb" aria-label="Novo layout"><svg><use href="#i-layout"/></svg></button>
      <button class="tb" aria-label="Gerenciador de layout"><svg><use href="#i-layoutmgr"/></svg></button>
      <button class="tb" aria-label="Gerenciador de estilos"><svg><use href="#i-style"/></svg></button>
    </div>
    <div class="group" role="toolbar" aria-label="Navegação no mapa">
      <button class="tb on" aria-label="Mover mapa"><svg><use href="#i-hand"/></svg></button>
      <button class="tb" aria-label="Mover para seleção"><svg><use href="#i-pansel"/></svg></button>
      <button class="tb" aria-label="Aproximar"><svg><use href="#i-zin"/></svg></button>
      <button class="tb" aria-label="Afastar"><svg><use href="#i-zout"/></svg></button>
      <button class="tb" aria-label="Ver tudo"><svg><use href="#i-zfull"/></svg></button>
      <button class="tb" aria-label="Ver seleção"><svg><use href="#i-zsel"/></svg></button>
      <button class="tb" aria-label="Ver camada"><svg><use href="#i-zlayer"/></svg></button>
      <button class="tb" disabled aria-label="Resolução nativa"><svg><use href="#i-znat"/></svg></button>
      <button class="tb" aria-label="Última visualização"><svg><use href="#i-zlast"/></svg></button>
      <button class="tb" disabled aria-label="Próxima visualização"><svg><use href="#i-znext"/></svg></button>
      <button class="tb" aria-label="Nova vista de mapa"><svg><use href="#i-newmap"/></svg></button>
      <button class="tb" aria-label="Nova vista 3D"><svg><use href="#i-new3d"/></svg></button>
      <button class="tb" aria-label="Novo favorito"><svg><use href="#i-newbm"/></svg></button>
      <button class="tb" aria-label="Favoritos"><svg><use href="#i-bm"/></svg></button>
      <button class="tb" aria-label="Controle temporal"><svg><use href="#i-clock"/></svg></button>
      <button class="tb" aria-label="Atualizar"><svg><use href="#i-refresh"/></svg></button>
    </div>
    <div class="group" role="toolbar" aria-label="Atributos">
      <button class="tb" aria-label="Identificar"><svg><use href="#i-info"/></svg></button>
      <button class="tb" aria-label="Tabela de atributos"><svg><use href="#i-table"/></svg></button>
      <button class="tb" aria-label="Calculadora de campo"><svg><use href="#i-abacus"/></svg></button>
      <button class="tb" aria-label="Processamento"><svg><use href="#i-gear"/></svg></button>
      <button class="tb" aria-label="Estatísticas"><svg><use href="#i-sum"/></svg></button>
      <button class="tb" aria-label="Medir"><svg><use href="#i-ruler"/></svg></button><button class="drop" aria-label="Opções de medida"></button>
      <button class="tb" aria-label="Dicas do mapa"><svg><use href="#i-tip"/></svg></button>
      <button class="tb" disabled aria-label="Executar ação"><svg><use href="#i-action"/></svg></button><button class="drop" disabled aria-label="Opções de ação"></button>
      <button class="tb" aria-label="Anotação"><svg><use href="#i-text"/></svg></button><button class="drop" aria-label="Opções de anotação"></button>
    </div>
  </div>

  <div class="toolrow">
    <div class="group" role="toolbar" aria-label="Fontes de dados">
      <button class="tb" aria-label="Fontes de dados"><svg><use href="#i-dsm"/></svg></button>
      <button class="tb" aria-label="Novo GeoPackage"><svg><use href="#i-newgpkg"/></svg></button>
      <button class="tb" aria-label="Novo shapefile"><svg><use href="#i-newshape"/></svg></button>
      <button class="tb" aria-label="Novo SpatiaLite"><svg><use href="#i-newfeather"/></svg></button>
      <button class="tb" aria-label="Nova camada temporária"><svg><use href="#i-mem"/></svg></button>
      <span class="sep"></span>
      <button class="tb" aria-label="Nova camada virtual"><svg><use href="#i-virtual"/></svg></button>
      <span class="sep"></span>
    </div>
    <div class="group" role="toolbar" aria-label="Edição">
      <button class="tb more" disabled aria-label="Edições atuais"><svg><use href="#i-edits"/></svg></button>
      <button class="tb" aria-label="Alternar edição"><svg><use href="#i-pencil"/></svg></button>
      <button class="tb" disabled aria-label="Salvar edições"><svg><use href="#i-saveedit"/></svg></button>
      <button class="tb" disabled aria-label="Adicionar polígono"><svg><use href="#i-addpoly"/></svg></button>
      <button class="tb" disabled aria-label="Ferramenta de vértice"><svg><use href="#i-vertex"/></svg></button><button class="drop" disabled aria-label="Opções de vértice"></button>
      <button class="tb" disabled aria-label="Modificar atributos"><svg><use href="#i-modattr"/></svg></button>
      <button class="tb" disabled aria-label="Excluir"><svg><use href="#i-trash"/></svg></button>
      <button class="tb" disabled aria-label="Recortar"><svg><use href="#i-cut"/></svg></button>
      <button class="tb" disabled aria-label="Copiar"><svg><use href="#i-copy"/></svg></button>
      <button class="tb" disabled aria-label="Colar"><svg><use href="#i-paste"/></svg></button>
      <button class="tb" disabled aria-label="Desfazer"><svg><use href="#i-undo"/></svg></button>
      <button class="tb" disabled aria-label="Refazer"><svg><use href="#i-redo"/></svg></button>
    </div>
    <div class="group" role="toolbar" aria-label="Rótulos">
      <button class="tb" aria-label="Rótulos"><svg><use href="#i-label"/></svg></button>
      <button class="tb" aria-label="Diagramas"><svg><use href="#i-diagram"/></svg></button>
      <span class="sep"></span>
      <button class="tb" aria-label="Rótulos fixados"><svg><use href="#i-pin"/></svg></button>
      <button class="tb" aria-label="Rótulos não posicionados"><svg><use href="#i-labelred"/></svg></button>
      <span class="sep"></span>
      <button class="tb" disabled aria-label="Fixar rótulo"><svg><use href="#i-lpin"/></svg></button>
      <button class="tb" disabled aria-label="Mostrar rótulo"><svg><use href="#i-leye"/></svg></button>
      <button class="tb" disabled aria-label="Mover rótulo"><svg><use href="#i-lmove"/></svg></button>
      <button class="tb" disabled aria-label="Girar rótulo"><svg><use href="#i-lrot"/></svg></button>
      <button class="tb" disabled aria-label="Alterar rótulo"><svg><use href="#i-lchg"/></svg></button>
    </div>
    <div class="group" role="toolbar" aria-label="Banco de dados"><button class="tb" aria-label="Gerenciador BD"><svg><use href="#i-db"/></svg></button></div>
    <div class="group" role="toolbar" aria-label="Web"><button class="tb" aria-label="MetaSearch"><svg><use href="#i-metasearch"/></svg></button></div>
    <div class="group" role="toolbar" aria-label="Complementos"><button class="tb" aria-label="Terminal Python"><svg><use href="#i-python"/></svg></button></div>
    <div class="group" role="toolbar" aria-label="Ajuda"><button class="tb" aria-label="Conteúdo da ajuda"><svg><use href="#i-help"/></svg></button></div>
    <div class="group" role="toolbar" aria-label="Vetor"></div>
  </div>

  <div class="toolrow">
    <div class="group" role="toolbar" aria-label="Aderência">
      <button class="tb" aria-label="Ativar aderência"><svg><use href="#i-magnet"/></svg></button>
      <button class="tb more" disabled aria-label="Modo de aderência"><svg><use href="#i-snapv"/></svg></button>
      <button class="tb more on" disabled aria-label="Tipo de aderência"><svg><use href="#i-snapdots"/></svg></button>
      <span class="spin off snap-size"><input type="text" value="12" disabled aria-label="Tolerância"><i class="arrows"></i></span>
      <select class="combo snap-unit" disabled aria-label="Unidade"><option>px</option></select>
      <button class="tb" aria-label="Edição topológica"><svg><use href="#i-topo"/></svg></button>
      <button class="tb more" aria-label="Sobreposição"><svg><use href="#i-overlap"/></svg></button>
      <button class="tb" disabled aria-label="Aderência em interseção"><svg><use href="#i-cross"/></svg></button>
      <button class="tb" disabled aria-label="Traçado"><svg><use href="#i-trace"/></svg></button><button class="drop" disabled aria-label="Opções de traçado"></button>
      <button class="tb" disabled aria-label="Autoaderência"><svg><use href="#i-self"/></svg></button>
    </div>
  </div>

  <div class="toolrow">
    <div class="group" role="toolbar" aria-label="Seleção">
      <button class="tb" aria-label="Selecionar feições"><svg><use href="#i-select"/></svg></button><button class="drop" aria-label="Opções de seleção"></button>
      <button class="tb" aria-label="Selecionar por valor"><svg><use href="#i-selval"/></svg></button><button class="drop" aria-label="Opções por valor"></button>
      <button class="tb" aria-label="Desfazer seleção"><svg><use href="#i-desel"/></svg></button><button class="drop" aria-label="Opções de desfazer"></button>
      <button class="tb" aria-label="Selecionar por localização"><svg><use href="#i-selloc"/></svg></button>
    </div>
  </div>

  <main class="work">
    <aside class="docks">
      <section class="dock browser">
        <div class="dockhead"><h2>Navegador</h2><button aria-label="Destacar"><svg><use href="#p-float"/></svg></button><button aria-label="Fechar painel"><svg><use href="#p-close"/></svg></button></div>
        <div class="docktools">
          <button aria-label="Adicionar"><svg><use href="#p-add"/></svg></button><button aria-label="Atualizar"><svg><use href="#i-refresh"/></svg></button><button aria-label="Filtrar"><svg><use href="#p-filter"/></svg></button><button aria-label="Recolher"><svg><use href="#p-up"/></svg></button><button aria-label="Propriedades"><svg><use href="#p-info"/></svg></button>
        </div>
        <div class="treebox">
          <ul class="tree">
            <li><svg><use href="#t-star"/></svg>Favoritos</li>
            <li class="shut"><svg><use href="#i-bm"/></svg>Favoritos Espaciais</li>
            <li class="shut"><svg><use href="#t-home"/></svg>Início</li>
            <li class="shut"><svg><use href="#t-folder"/></svg>C:\</li>
            <li class="opened"><svg><use href="#i-gpkg"/></svg>GeoPackage</li>
            <li class="child shut"><svg><use href="#t-dbs"/></svg>teste.gpkg</li>
            <li><svg><use href="#i-feather"/></svg>SpatiaLite</li>
            <li class="opened"><svg><use href="#t-pg"/></svg>PostGIS</li>
            <li class="child shut"><svg><use href="#t-conn"/></svg>curso_udemy</li>
            <li class="child shut"><svg><use href="#t-conn"/></svg>nyc</li>
            <li class="child shut"><svg><use href="#t-conn"/></svg>sbde</li>
            <li><svg><use href="#t-mssql"/></svg>MSSQL</li>
            <li><svg><use href="#t-oracle"/></svg>Oracle</li>
            <li><svg><use href="#t-db2"/></svg>DB2</li>
            <li><svg><use href="#b-globe"/></svg>WMS/WMTS</li>
            <li><svg><use href="#t-vt"/></svg>Vector Tiles</li>
            <li class="opened"><svg><use href="#t-xyz"/></svg>XYZ Tiles</li>
            <li class="child"><svg><use href="#t-xyz"/></svg>bing</li>
            <li class="child"><svg><use href="#t-xyz"/></svg>google híbrido</li>
            <li class="child"><svg><use href="#t-xyz"/></svg>google satellite</li>
            <li class="child"><svg><use href="#t-xyz"/></svg>OpenStreetMap</li>
            <li><svg><use href="#t-wcs"/></svg>WCS</li>
          </ul>
          <div class="scroll"><i class="up"></i><i class="thumb"></i><i class="track"></i><i class="down"></i></div>
        </div>
      </section>
      <div class="hgrip"></div>
      <section class="dock layers">
        <div class="dockhead"><h2>Camadas</h2><button aria-label="Destacar"><svg><use href="#p-float"/></svg></button><button aria-label="Fechar painel"><svg><use href="#p-close"/></svg></button></div>
        <div class="docktools">
          <button aria-label="Estilização"><svg><use href="#p-style"/></svg></button><button aria-label="Adicionar grupo"><svg><use href="#p-group"/></svg></button><button class="more" aria-label="Temas do mapa"><svg><use href="#p-eye"/></svg></button><button aria-label="Filtrar legenda"><svg><use href="#p-filter"/></svg></button><button aria-label="Filtrar por expressão"><svg><use href="#p-eps"/></svg></button><button class="drop" disabled aria-label="Opções de expressão"></button><button aria-label="Expandir tudo"><svg><use href="#p-down"/></svg></button><button aria-label="Recolher tudo"><svg><use href="#p-up"/></svg></button><button aria-label="Remover camada"><svg><use href="#p-remove"/></svg></button>
        </div>
        <ul class="layerlist">
          <li><input type="checkbox" id="l1" checked><span class="sym"><i class="dot"></i></span><label for="l1">vw_pista_pouso</label></li>
          <li><input type="checkbox" id="l2" checked><span class="sym"><i class="line"></i></span><label for="l2">vw_pista_pouso</label></li>
          <li><input type="checkbox" id="l3" checked><span class="sym"><i class="area"></i></span><label for="l3" class="current">pais</label></li>
        </ul>
      </section>
    </aside>
    <div class="vgrip"></div>
    <section class="canvas" aria-label="Mapa">
      <svg id="map" viewBox="263 202 1653 819" preserveAspectRatio="xMidYMid meet">
        <path id="land"/><path id="lagoon"/><path id="delta"/>
        <g id="minor"></g><g id="major"></g>
        <path class="isle" d="M1537 396h3v1h-3zM1407 689l2 1-1 3-1-1zM1602 742h2v1h-2zM1612 742h1v1h-1z"/>
      </svg>
    </section>
  </main>

  <footer class="status">
    <label class="locator"><svg><use href="#s-search"/></svg><input type="text" placeholder="Escreva para localizar (Ctrl+K)" aria-label="Localizar"></label>
    <div class="fields">
      <label for="coord">Coordenada</label><input id="coord" class="box coord" type="text" value="-54.35,-5.30">
      <button class="ic" aria-label="Alternar extensão"><svg><use href="#s-track"/></svg></button>
      <label for="scale" class="gap">Escala</label><span class="pick"><input id="scale" type="text" value="1:33828640"><button aria-label="Lista de escalas"></button></span>
      <button class="ic" aria-label="Travar escala"><svg><use href="#s-lock"/></svg></button>
      <label for="zoom">Lupa</label><span class="spin"><input id="zoom" type="text" value="100%"><i class="arrows"></i></span>
      <label for="rot" class="rot">Rotação</label><span class="spin"><input id="rot" type="text" value="0,0 °"><i class="arrows"></i></span>
      <input type="checkbox" id="render" checked><label for="render">Renderizar</label>
      <button class="crs"><svg><use href="#s-globe"/></svg>EPSG:4674</button>
      <button class="ic" aria-label="Mensagens"><svg><use href="#s-chat"/></svg></button>
    </div>
  </footer>
</div>
<script src="map.js"></script>
</body>
</html>
```

FILE: styles.css
```css
* { box-sizing: border-box; }

body {
  margin: 0;
  background: #efefef;
  color: #111;
  font: 12px/16px "Open Sans", "Noto Sans", sans-serif;
}

button, input, select {
  font: inherit;
  color: inherit;
  margin: 0;
}

button {
  padding: 0;
  border: 0;
  background: none;
}

ul { list-style: none; margin: 0; padding: 0; }
.defs { position: absolute; width: 0; height: 0; }
.glyph { font-family: "Open Sans", sans-serif; }
.serif { font-family: "Liberation Serif", serif; font-style: italic; font-weight: 700; }
.upright { font-style: normal; }

.window {
  display: flex;
  flex-direction: column;
  height: 100vh;
  border-bottom: 1px solid #111;
}

/* title bar */
.titlebar {
  display: flex;
  align-items: center;
  height: 23px;
  flex: none;
  padding-left: 2px;
  background: #fff;
  color: #000;
}
.logo { width: 16px; height: 16px; margin-right: 5px; }
.winbtns { display: flex; margin-left: auto; }
.winbtns button { width: 45px; height: 22px; }
.winbtns svg { width: 12px; height: 12px; }

/* menu */
.menubar {
  display: flex;
  height: 21px;
  flex: none;
  padding-left: 4px;
  border-bottom: 1px solid #d2d2d2;
  background: #efefef;
}
.menubar button { padding: 0 6px; line-height: 20px; }
.menubar u { text-underline-offset: 2px; }

/* toolbars */
.toolrow {
  display: flex;
  height: 39px;
  flex: none;
  background: linear-gradient(#fafafa, #ededed);
  border-bottom: 1px solid #b4b4b4;
}
.group { display: flex; align-items: center; }
.group + .group { margin-left: 3px; }
.group::before {
  content: "";
  width: 5px;
  height: 21px;
  margin: 0 4px 0 4px;
  background: linear-gradient(90deg, #0000 1px, #f6f6f6 1px) 0 0 / 2px 2px, linear-gradient(#bdbdbd 1px, #0000 1px) 0 0 / 2px 2px;
}
.tb {
  position: relative;
  width: 31px;
  height: 31px;
  margin: 0 1px;
  border-radius: 2px;
}
.tb svg { display: block; width: 23px; height: 24px; margin: auto; }
.tb.on { background: #d9d9d9; border: 1px solid #b0b0b0; }
.tb:disabled svg { opacity: .32; filter: grayscale(.85); }
.more { position: relative; }
.tb.more::after, .docktools .more::after {
  content: "";
  position: absolute;
  right: 3px;
  bottom: 3px;
  border: 3px solid #0000;
  border-top-color: #555;
  border-bottom: 0;
}
.tb.more:disabled::after { border-top-color: #999; }
.drop { width: 12px; height: 31px; flex: none; }
.drop::before {
  content: "";
  display: block;
  width: 0;
  margin: auto;
  border: 4px solid #0000;
  border-top-color: #555;
  border-bottom: 0;
}
.drop:disabled::before { border-top-color: #999; }
.sep { width: 1px; height: 28px; margin: 0 3px; background: #cfcfcf; }

/* fields */
.spin, .pick {
  display: flex;
  height: 21px;
  border: 1px solid #a6a6a6;
  border-radius: 2px;
  background: #fff;
}
.spin input, .pick input {
  flex: 1;
  min-width: 0;
  padding: 0 0 0 4px;
  border: 0;
  background: none;
}
.arrows {
  display: flex;
  flex-direction: column;
  justify-content: center;
  align-items: center;
  gap: 4px;
  width: 14px;
  border-left: 1px solid #b8b8b8;
}
.arrows::before, .arrows::after { content: ""; border: 4px solid #0000; }
.arrows::before { border-bottom: 5px solid #666; border-top: 0; }
.arrows::after { border-top: 5px solid #666; border-bottom: 0; }
.spin.off { background: #f0f0f0; color: #888; }
.spin.off .arrows { opacity: .7; }
.snap-size { width: 81px; margin-right: 1px; }
.combo {
  width: 89px;
  height: 22px;
  padding: 0 4px;
  border: 1px solid #bbb;
  border-radius: 2px;
  appearance: none;
  color: #888;
  opacity: 1;
  background: conic-gradient(from -45deg at 50% 100%, #999 90deg, #0000 0) 74px 8px / 8px 4px no-repeat, #f6f6f6;
}

/* working area */
.work { display: flex; flex: 1; min-height: 0; }
.docks { display: flex; flex-direction: column; width: 256px; flex: none; padding-top: 1px; }
.dock { display: flex; flex-direction: column; min-height: 0; }
.browser { flex: 445; }
.layers { flex: 364; }
.dockhead { display: flex; align-items: center; height: 18px; flex: none; gap: 2px; padding: 0 2px 0 4px; }
.dockhead h2 { flex: 1; margin: 0; font-size: 12px; font-weight: 400; }
.dockhead button, .dockhead svg { display: block; width: 12px; height: 12px; }
.docktools { display: flex; align-items: center; height: 31px; flex: none; padding: 0 0 2px 3px; }
.docktools button { width: 25px; height: 24px; }
.docktools svg { display: block; width: 16px; height: 16px; margin: auto; }
.docktools .more::after { right: 1px; bottom: 1px; }
.docktools .drop { width: 12px; }
.treebox, .layerlist { flex: 1; min-height: 0; border: 1px solid #b0b0b0; background: #fff; overflow: hidden; }
.treebox { display: flex; }
.tree { flex: 1; padding-top: 1px; }
.tree li { position: relative; display: flex; align-items: center; gap: 6px; height: 18px; padding-left: 23px; white-space: nowrap; }
.tree li.child { padding-left: 43px; }
.tree svg { width: 16px; height: 16px; flex: none; }
.tree li::before { position: absolute; left: 8px; border: 4px solid #0000; }
.tree li.child::before { left: 28px; }
.tree .shut::before { content: ""; border-left: 5px solid #555; border-right: 0; }
.tree .opened::before { content: ""; left: 7px; border-top: 5px solid #555; border-bottom: 0; }
.scroll { display: flex; flex-direction: column; width: 14px; border-left: 1px solid #c0c0c0; }
.scroll i { display: flex; justify-content: center; align-items: center; }
.scroll .up, .scroll .down { height: 14px; background: #f8f8f8; }
.scroll .up { border-bottom: 1px solid #b8b8b8; }
.scroll .up::before, .scroll .down::before { content: ""; border: 4px solid #0000; }
.scroll .up::before { border-bottom-color: #555; border-top: 0; }
.scroll .down::before { border-top-color: #555; border-bottom: 0; }
.scroll .thumb { flex: 302; background: #fafafa; border-bottom: 1px solid #b8b8b8; }
.scroll .track { flex: 68; background: #dedede; border-bottom: 1px solid #b8b8b8; }
.hgrip { height: 7px; flex: none; background: repeating-linear-gradient(90deg, #b4b4b4 0 1px, #0000 1px 3px) center / 17px 3px no-repeat; }
.layerlist { padding-top: 1px; }
.layerlist li { display: flex; align-items: center; height: 18px; padding: 0 1px 0 23px; font-weight: 700; }
.sym { display: flex; align-items: center; justify-content: center; width: 26px; height: 18px; padding-left: 3px; }
.sym .dot { width: 5px; height: 5px; border-radius: 3px; background: #8c8455; }
.sym .line { width: 14px; height: 2px; background: #8a8550; }
.sym .area { width: 16px; height: 16px; background: #e9e8d8; border: 1px solid #888; }
.layerlist label { flex: 1; height: 18px; padding-left: 2px; border: 1px solid #0000; }
.layerlist .current { text-decoration: underline; border-color: #bcdcee; background: linear-gradient(#f8fcff, #e6f3fb); }
input[type="checkbox"] {
  appearance: none;
  width: 13px;
  height: 13px;
  flex: none;
  border: 1px solid #aaa;
  background: #fff;
}
input[type="checkbox"]:checked::before {
  content: "";
  display: block;
  width: 4px;
  height: 8px;
  margin: 0 0 0 4px;
  border: solid #111;
  border-width: 0 2px 2px 0;
  rotate: 35deg;
}
.vgrip { width: 6px; flex: none; background: repeating-linear-gradient(#b4b4b4 0 1px, #0000 1px 3px) center / 3px 17px no-repeat; }
.canvas { flex: 1; min-width: 0; margin-top: 1px; border: solid #b0b0b0; border-width: 1px 0 1px 1px; background: #fff; }
#map { display: block; width: 100%; height: 100%; }
#land { fill: #e9eada; stroke: #1c1c1c; stroke-width: 1; stroke-linejoin: round; }
#lagoon { fill: #fff; stroke: #1c1c1c; stroke-width: 1; }
#delta { fill: none; stroke: #1c1c1c; stroke-width: 1; }
#minor { fill: #78683a; }
#major { fill: #c3bd2c; stroke: #2e2504; stroke-width: 1; }
.isle { fill: #232323; }

/* status bar */
.status { display: flex; align-items: center; height: 28px; flex: none; padding-left: 4px; }
.locator {
  display: flex;
  align-items: center;
  gap: 8px;
  width: 264px;
  height: 22px;
  padding: 0 8px;
  border: 1px solid #a6a6a6;
  border-radius: 2px;
  background: #fff;
}
.locator svg { width: 13px; height: 13px; flex: none; }
.locator input { flex: 1; min-width: 0; padding: 0; border: 0; background: none; }
.locator input::placeholder { color: #7a7a7a; opacity: 1; }
.fields { display: flex; align-items: center; gap: 3px; margin-left: auto; font-size: 11px; }
.box { height: 21px; border: 1px solid #a6a6a6; border-radius: 2px; background: #fff; text-align: center; }
.coord { width: 82px; padding: 0; }
.fields .spin { width: 84px; }
.fields .gap { margin-left: 5px; }
.fields .rot { margin: 0 4px 0 5px; }
.fields input[type="checkbox"] { margin: 0 2px 0 4px; }
.pick { width: 81px; margin-right: 3px; }
.pick input { padding: 0; text-align: right; }
.pick button { width: 18px; margin-left: 1px; border-left: 1px solid #b8b8b8; }
.pick button::before { content: ""; display: block; width: 0; margin: auto; border: 4px solid #0000; border-top: 5px solid #666; border-bottom: 0; }
.ic { width: 22px; height: 20px; }
.ic svg { display: block; width: 16px; height: 16px; margin: auto; }
.crs { display: flex; align-items: center; gap: 2px; margin: 0 16px 0 10px; }
.crs svg { width: 16px; height: 16px; }
```

FILE: map.js
```js
// Digitised map data, stored in tiles of three units per map pixel.
const tiles = {
  a: { x: 660, y: 195 }, b: { x: 1100, y: 195 }, c: { x: 920, y: 580 },
  d: { x: 1200, y: 580 }, e: { x: 980, y: 800 }
};
const read = (tile, text) => text.trim().split(/\s+/).map(p => {
  const [x, y] = p.split(',').map(Number);
  return [tiles[tile].x + x / 3, tiles[tile].y + y / 3];
});
let seed = 20210;
const rnd = () => (seed = (seed * 16807) % 2147483647) / 2147483647;

const border = [
  ['a', '868,38 908,36 911,50 904,78 928,86 940,116 922,140 911,185 926,215 926,248 950,272 986,290 1004,278 1015,265 1032,270 1040,258 1062,258 1085,237 1100,243 1130,242 1165,247 1167,227 1154,216 1162,206 1200,210 1224,203 1250,213 1272,226 1300,217 1340,225'],
  ['b', '35,225 55,207 70,163 100,125 116,100 120,86 138,100 148,120 152,170 172,226 190,228 202,250 222,258 223,285 211,320 214,342 236,341 255,360 290,378 316,380 313,394 344,405 355,397 380,400 410,408 440,424 480,436 508,455 510,467 530,445 545,458 558,485 570,518 592,520 614,503 640,510 690,530 728,535 740,545 785,545 850,543 900,575 935,603 990,648 1010,658 1018,671 1046,680 1105,679 1130,692 1145,730 1155,775 1166,820 1160,870 1140,925 1105,970 1066,1020 1040,1030 1010,1070 990,1115 945,1168'],
  ['d', '640,18 608,38 603,90 598,120 605,150 604,170 611,198 600,240 590,290 592,315 570,335 557,375 558,425 535,445 525,480 493,512 475,550 479,580 435,600 415,618 420,640 385,641 335,643 300,640 265,648 240,655 205,688 200,694 222,697 205,702 180,692 155,700 145,708 110,720 80,748'],
  ['e', '715,105 672,152 661,165 665,187 658,210 665,240 678,262 665,280 652,332 620,350 590,385 570,415 555,450 520,498 480,530 440,560 425,580 415,605 390,632 365,655 355,650 362,620 385,600 408,602 414,580 405,558 402,572 380,588 350,575 345,558 320,538 290,512 258,503 228,475 205,490 200,470 150,430 125,430 118,438 102,434 125,408 165,370 215,315 275,275 345,240 342,215 347,185 335,150 315,143 297,150 289,140 298,125 307,55 290,38 240,45'],
  ['c', '415,705 410,660 405,600 385,598 350,590 340,598 300,597 258,585 268,550 268,510 262,480 248,467 265,455 250,440 275,395 280,350 275,325 240,285 226,260 228,245 238,228 120,223 117,180 97,150 115,153 115,125 102,100 105,72 65,52 10,50'],
  ['a', '785,1195 750,1178 715,1155 680,1140 635,1138 600,1105 585,1085 580,1040 577,970 525,975 490,985 435,1022 405,1033 385,1053 365,1055 345,1045 300,1046 265,1054 248,1048 248,975 254,955 205,985 180,989 150,988 143,960 120,950 86,949 104,928 80,895 62,870 50,850 37,832 50,815 55,785 90,768 83,740 98,715 108,683 170,645 228,636 240,623 265,624 290,632 322,432 310,395 283,375 284,328 315,320 340,323 338,298 296,294 296,255 350,253 398,253 400,240 425,238 450,225 456,245 467,265 468,288 485,290 518,314 560,302 568,320 595,290 655,262 658,240 690,235 699,222 697,212 662,208 660,185 648,170 647,140 630,122 610,95 635,105 658,118 700,118 725,135 742,108 775,103 815,92 845,78 868,60 872,48']
];
const lagoon = read('e', '497,425 495,440 510,440 520,436 535,445 540,435 542,446 530,470 515,492 490,520 460,538 450,548 438,545 438,530 450,525 450,508 475,500 490,480 497,455');

// Rivers and coast wander: split short segments and nudge the new points.
function wander(pts, amount) {
  const out = [];
  pts.forEach((p, i) => {
    out.push(p);
    const q = pts[(i + 1) % pts.length];
    const len = Math.hypot(q[0] - p[0], q[1] - p[1]);
    if (len > 24) return;
    const n = Math.floor(len / 2.5);
    for (let k = 1; k < n; k++) {
      const t = k / n;
      out.push([p[0] + (q[0] - p[0]) * t + (rnd() - .5) * amount, p[1] + (q[1] - p[1]) * t + (rnd() - .5) * amount]);
    }
  });
  return out;
}
const toPath = pts => 'M' + pts.map(p => p[0].toFixed(1) + ' ' + p[1].toFixed(1)).join('L');
const land = document.getElementById('land');
land.setAttribute('d', toPath(wander(border.flatMap(b => read(b[0], b[1])), 2)) + 'Z');
document.getElementById('lagoon').setAttribute('d', toPath(wander(lagoon, 1.7)) + 'Z');

const delta = [];
read('b', '344,404 380,400 410,408 440,424 480,436 508,455 530,447 545,460 558,485').forEach((p, i, all) => {
  const q = all[i + 1];
  if (!q) return;
  for (let t = 0; t < 1; t += .06) {
    const s = i < 2 ? 2 : 5;
    delta.push([p[0] + (q[0] - p[0]) * t + (rnd() - .5) * s, p[1] + (q[1] - p[1]) * t + (rnd() - .5) * s]);
  }
});
document.getElementById('delta').setAttribute('d', toPath(delta) + toPath(read('d', '335,640 345,628 340,645 350,630 335,636')) + toPath(read('d', '262,650 275,641 290,648 300,641')));

const major = [
  ['a', '553,883 757,961 788,951 790,943 824,934 829,940 838,943 850,925 866,934 868,943 895,946 892,955 899,961 905,967 871,964 869,976 817,982 820,991 842,979 839,988 857,991 862,994 868,988 872,997 880,988 904,991 823,1009 826,1021 838,1021 844,1012 847,1024 826,1033 835,1033 829,1039 877,1030 886,1033 880,1048 832,1063 814,1078 826,1081 799,1096 871,1087 880,1081 904,1090 961,1093 967,1090 1006,1099 1021,1087 709,1000 715,1003 685,1024 655,1054 664,1087 670,1093 1027,1138 1069,1138 1099,1165 1126,1084 1168,1057 1198,1072 1195,1105 1201,1132 1166,1150 1174,1150 1171,1168 1138,1168 1130,1180 1036,1186 1234,1153 1264,1096 1273,1084'],
  ['b', '535,475 550,481 550,493 583,514 538,532 625,520 622,526 664,535 697,535 787,544 832,544 928,601 418,571 511,592 403,625 433,637 388,652 373,670 310,628 583,622 634,595 634,619 646,616 778,595 472,685 466,694 460,703 355,715 418,712 670,676 670,685 256,742 322,745 307,763 277,775 361,760 373,772 250,793 256,826 568,760 664,754 682,778 736,739 577,799 568,826 577,832 538,832 457,829 721,814 730,808 736,844 832,772 901,775 970,742 964,763 970,844 1120,693 1138,739 1150,763 1147,787 1108,772 1114,781 1105,796 1048,796 1054,805 1039,811 1060,820 1024,835 1033,841 1063,883 1159,868 1135,901 271,868 202,865 217,865 280,898 190,925 157,940 211,943 229,961 73,970 111,970 118,970 127,970 82,991 88,1000 64,1006 301,982 319,994 247,1033 331,1036 304,1051 439,886 481,892 604,874 655,868 439,1021 532,1021 559,1048 817,949 895,979 979,961 1093,955 1105,961 1051,973 1075,976 1078,985 1069,988 1072,1000 1015,1039 1021,1045 1006,1075 961,1102 13,1063 49,1069 43,1090 70,1078 73,1102 133,1081 127,1093 167,1069 223,1060 109,1123 103,1141 109,1147 94,1153 88,1168 88,1192 49,1153 160,1112 157,1126 219,1099 232,1099 233,1102 217,1117 256,1096 221,1147 224,1147 367,1060 370,1060 415,1093 448,1102 481,1105 547,1114 574,1114 583,1096 637,1084 670,1162 757,1162 784,1195 907,1195 394,1186 412,1190 430,1171 292,1186'],
  ['c', '256,31 262,61 200,67 208,49 221,49 227,46 320,10 349,25 358,13 391,13 454,0 322,67 307,91 268,97 316,115 418,85 400,46 428,49 433,52 487,49 526,46 541,52 590,0 628,13 634,0 628,37 595,67 643,82 700,70 700,78 724,70 748,88 772,82 787,67 778,100 823,55 832,31 853,49 685,109 715,115 718,115 730,115 745,118 733,130 766,121 796,133 793,157 760,178 841,172 862,154 865,151 859,202 874,220 139,85 151,94 157,115 172,130 154,142 178,145 184,148 172,160 205,160 205,166 221,160 226,166 237,163 247,154 256,133 257,142 256,147 277,121 355,133 287,148 299,145 307,148 328,151 343,160 304,166 310,169 206,184 199,184 207,189 236,184 242,184 175,187 154,193 136,205 163,217 197,214 208,214 200,222 247,217 265,223 280,220 274,190 295,190 349,193 376,178 380,181 385,178 391,175 436,157 504,106 503,114 505,121 503,142 538,154 553,181 583,190 628,136 445,211 454,217 472,205 427,235 373,223 271,244 304,253 241,274 256,289 310,275 313,280 316,281 370,250 382,244 385,262 400,259 384,277 400,268 403,272 427,284 448,265 461,235 463,238 493,232 496,244 487,250 481,253 478,259 484,271 457,286 457,310 508,289 517,298 490,331 478,331 448,355 415,334 397,346 346,289 349,290 364,283 331,304 325,310 346,310 307,322 313,325 319,328 325,319 331,325 337,319 331,334 340,328 346,325 349,316 355,322 361,328 367,325 373,319 379,313 376,328 388,316 391,325 394,307 400,313 403,301 406,290 410,298 415,307 418,301 424,304 409,316 400,322 307,337 313,340 322,340 328,343 334,346 346,337 316,352 313,361 334,361 310,373 331,373 283,322 280,328 286,334 283,346 281,364 292,364 280,373 355,358 361,364 370,364 379,364 382,370 388,376 373,376 388,382 358,388 361,394 334,388 328,397 316,391 316,403 319,409 331,409 334,418 319,424 334,430 337,442 385,397 391,403 388,412 394,409 382,415 397,418 406,403 409,394 424,394 439,391 403,412 406,424 412,430 424,427 415,439 376,424 370,430 364,430 358,418 379,442 400,418 388,424 409,446 400,463 403,457 280,397 274,400 274,424 286,421 280,430 271,436 277,442 301,439 292,457 298,463 310,463 304,472 295,470 334,463 340,463 346,466 355,469 361,460 340,472 346,481 364,481 382,463 388,469 397,472 391,487 415,475 436,478 454,445 283,496 292,511 280,520 274,532 274,553 316,532 331,496 337,505 349,517 373,538 370,550 397,514 379,505 382,505 421,505 298,595 310,589 361,586 385,598 404,598 412,598 412,607 427,609 460,493 463,496 466,502 472,511 478,478 478,526 499,508 526,502 532,511 541,514 559,511 562,517 433,559 463,553 460,559 454,562 472,571 457,583 508,550 502,562 535,559 556,550 577,556 601,565 622,553 619,574 619,586 616,592 613,601 583,595 571,616 535,586 547,598 547,613 541,619 535,643 502,601 493,625 502,625 469,631 550,487 556,478 562,475 571,469 574,478 577,484 586,478 586,487 601,463 598,451 595,445 586,439 580,424 565,418 571,397 550,403 526,397 502,397 538,433 610,499 592,358 592,382 628,412 631,415 634,439 649,403 661,400 673,397 685,391 697,394 682,367 676,340 679,430 715,427 706,445 724,451 733,451 688,490 658,505 676,508 721,502 721,517 742,493 655,544 691,550 610,253 673,286 697,274 703,274 709,268 730,289 745,286 745,304 727,312 730,313 733,328 748,325 781,331 784,373 787,391 793,241 835,268 898,265 901,265 820,298 868,298 893,298 910,292 928,226 925,247 913,334 952,328 961,307 979,184 934,31 952,34 949,43 970,16 958,64 970,61 952,85 862,418 817,436 835,442 835,466 820,475 844,484 856,487 862,502 886,505 877,523 817,529 826,529 847,535 862,535 865,544 868,550 858,559 862,574 808,562 886,448 895,454 901,451 925,466 919,418 934,418 922,418 982,442 976,520 916,583 940,568 799,592 766,595 724,592 739,595 700,592 670,595 685,604 676,607 661,613 676,619 757,613 751,631 742,646 760,643 769,640 718,667 718,673 748,679 754,682 856,610 847,628 838,640 808,658 829,664 883,664 898,664 922,667 907,688 862,682 859,690 853,697 808,706 797,715 733,740 760,742 952,613 964,646 970,652 943,682 988,541 988,265'],
  ['d', '370,7 457,7 478,46 484,40 370,67 607,43 607,53 595,64 604,73 601,91 178,115 295,136 319,157 328,172 352,187 391,151 175,217 154,226 307,226 361,241 361,250 397,244 451,211 460,214 448,244 469,238 478,247 481,253 544,217 532,262 598,238 595,253 151,262 196,271 235,268 253,268 232,292 202,310 301,277 325,319 361,328 325,370 325,397 208,376 481,379 520,373 187,472 304,502 364,502 415,505 439,466 520,484 298,565 340,571 352,553 460,574 286,613 409,616 412,620 178,646 202,640 160,679 223,673 244,658 262,646 271,645 272,650 331,643 385,640'],
  ['e', '694,91 517,121 541,136 628,139 661,163 664,187 586,181 457,187 427,226 550,235 586,247 586,256 646,238 661,256 658,274 346,244 370,247 364,256 454,301 475,331 571,358 373,367 346,403 454,388 481,403 574,406 505,418 502,421 166,370 181,388 136,409 208,409 520,490 439,553 319,529 388,619']
];
const minor = ['a', '881,53 869,92 629,112 684,186 730,206 868,186 868,188 860,194 855,206 818,237 841,247 675,249 686,290 714,292 881,286 912,271 909,298 448,250 435,295 484,292 528,323 298,346 377,355 452,333 452,342 474,372 599,387 785,391 596,448 674,427 728,424 809,454 906,412 948,483 1004,466 1046,453 1095,429 1113,456 1135,456 1171,469 1190,480 1131,491 1113,497 1155,498 1111,530 1095,536 1051,520 1022,540 1006,558 1053,573 909,522 908,552 911,558 968,605 936,638 887,683 830,726 807,596 615,574 714,621 711,715 353,578 480,667 576,668 294,777 180,802 112,836 181,881 237,872 636,770 576,816 612,817 474,844 718,834 870,815 921,810 795,863 453,915 491,950 667,907 594,955 336,993 410,975 418,980 423,987 402,1018 381,1028 376,1035 112,922 116,930 1160,628 1147,631 1103,674 1079,678 1090,710 1095,725 1068,729 1049,752 1145,781 1108,790 1124,790 1126,802 1128,818 1117,835 1114,839 1117,853 1124,853 1199,807 1207,840 1091,870 1234,872 1245,286 1245,309 1317,270 1281,487 1317,474 1236,514 1239,522 1228,529 1202,537 1266,538 1291,555 1273,597 1277,651 1300,660 1290,672 1310,765 1272,904 822,900 837,900 851,894 771,911 783,921 1476,205 1482,233 1448,309 1472,350 1469,358 1350,368 1381,411 1374,418 1536,372'];

// Airstrip density by zone: x, y, width, height, count.
const zones = [
  [1105, 335, 150, 150, 95], [1140, 390, 345, 110, 190], [1140, 490, 340, 105, 210],
  [960, 500, 180, 95, 170], [910, 535, 60, 70, 22], [930, 595, 130, 100, 150], [1010, 690, 250, 110, 230],
  [1050, 595, 200, 100, 250], [1240, 595, 165, 80, 110], [1230, 675, 150, 120, 100],
  [1075, 790, 150, 80, 60], [1060, 850, 120, 90, 40],
  [1245, 575, 24, 16, 26], [1127, 618, 26, 24, 26], [965, 578, 40, 40, 26], [1308, 786, 32, 10, 14]
];
const svgNS = 'http://www.w3.org/2000/svg';
function dot(parent, x, y, r) {
  const c = document.createElementNS(svgNS, 'circle');
  c.setAttribute('cx', x.toFixed(1));
  c.setAttribute('cy', y.toFixed(1));
  c.setAttribute('r', r);
  parent.append(c);
}
const minorG = document.getElementById('minor');
read(minor[0], minor[1]).forEach(p => dot(minorG, p[0], p[1], 1));
zones.forEach(([x, y, w, h, n]) => {
  for (let i = 0; i < n; i++) {
    const px = x + rnd() * w, py = y + rnd() * h;
    if (land.isPointInFill(new DOMPoint(px, py))) dot(minorG, px, py, 1);
  }
});
const majorG = document.getElementById('major');
major.forEach(m => read(m[0], m[1]).forEach(p => dot(majorG, p[0], p[1], 2.2)));
```
